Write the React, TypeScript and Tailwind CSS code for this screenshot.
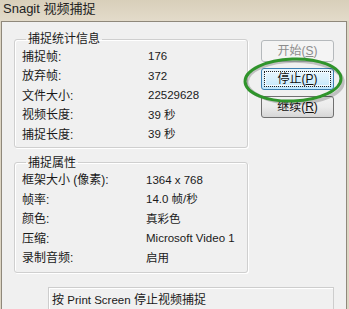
const FONT = { fontFamily: '"Liberation Sans", "Noto Sans CJK SC", sans-serif' };

const stats = [
  ["捕捉帧:", "176"],
  ["放弃帧:", "372"],
  ["文件大小:", "22529628"],
  ["视频长度:", "39 秒"],
  ["捕捉长度:", "39 秒"],
];

const props = [
  ["框架大小 (像素):", "1364 x 768"],
  ["帧率:", "14.0 帧/秒"],
  ["颜色:", "真彩色"],
  ["压缩:", "Microsoft Video 1"],
  ["录制音频:", "启用"],
];

function Group({ title, rows, valueX, pb }: { title: string; rows: string[][]; valueX: string; pb: string }) {
  return (
    <fieldset
      className={`border border-[#cfcfcf] rounded-[3px] shadow-[inset_1px_1px_0_#fff,1px_1px_0_#fff] pl-[7px] ${pb}`}
    >
      <legend className="ml-[4px] px-[2px] h-4 leading-4 text-[12px] text-[#1a1a1a]">{title}</legend>
      <div className="flex flex-col">
        {rows.map(([k, v]) => (
          <div key={k} className="flex items-center h-[19.5px] text-[12px] text-[#1a1a1a]">
            <span className={valueX}>{k}</span>
            <span className="text-[11.5px]">{v}</span>
          </div>
        ))}
      </div>
    </fieldset>
  );
}

function Btn({ label, mn, kind }: { label: string; mn: string; kind: "disabled" | "focus" | "normal" }) {
  const base = "w-[73px] h-[22px] rounded-[3px] border flex items-center justify-center text-[12px]";
  if (kind === "disabled")
    return (
      <div className={`${base} border-[#b5b9bc] bg-[#f4f4f4] text-[#8c8c8c]`}>
        {label}(<u>{mn}</u>)
      </div>
    );
  if (kind === "focus")
    return (
      <div className={`${base} border-[#3c7fb1] bg-linear-to-b from-[#eaf6fd] via-[#d9f0fc] to-[#bee6fd] p-[2px] text-[#111]`}>
        <div className="w-full h-full border border-dotted border-[#222] flex items-center justify-center shadow-[inset_0_0_0_1px_#f4fbff]">
          {label}(<u>{mn}</u>)
        </div>
      </div>
    );
  return (
    <div className={`${base} border-[#707070] bg-linear-to-b from-[#f2f2f2] via-[#ebebeb] to-[#d6d6d6] text-[#111]`}>
      {label}(<u>{mn}</u>)
    </div>
  );
}

export default function App() {
  return (
    <div style={FONT} className="relative w-[349px] h-[309px] overflow-hidden bg-[#ddd5c3]">
      {/* Title bar */}
      <div className="h-[21px] pl-[3px] pt-[1px] leading-[16px] text-[13px] text-[#222] bg-linear-to-b from-[#d8cfba] to-[#e3dbca]">
        Snagit 视频捕捉
      </div>

      {/* Window body */}
      <div className="ml-[1px] w-[346px] h-[288px] border-l border-t border-r border-[#8f887b] bg-[#f0f0f0] pl-[12px] pt-[9px]">
        <div className="flex">
          <div className="w-[234px] flex flex-col">
            <Group title="捕捉统计信息" rows={stats} valueX="w-[126px]" pb="pb-[2px]" />
            <div className="mt-[7px]">
              <Group title="捕捉属性" rows={props} valueX="w-[124px]" pb="pb-[4px]" />
            </div>
          </div>
          <div className="ml-[13px] mt-[9px] flex flex-col gap-[6px]">
            <Btn label="开始" mn="S" kind="disabled" />
            <Btn label="停止" mn="P" kind="focus" />
            <Btn label="继续" mn="R" kind="normal" />
          </div>
        </div>

        {/* Status */}
        <div className="ml-[34px] mt-[14px] w-[286px] h-[30px] border-l border-t border-r border-[#cdcdcd] shadow-[inset_1px_1px_0_#fff] pl-[3px] pt-[4px] leading-4 text-[12px] text-[#1a1a1a]">
          按 <span className="text-[11.5px]">Print Screen</span> 停止视频捕捉
        </div>
      </div>

      {/* Green highlight ellipse */}
      <svg className="absolute left-[241px] top-[55px]" width="106" height="52" viewBox="0 0 106 52">
        <ellipse cx="54" cy="27" rx="48" ry="21" fill="none" stroke="#000" strokeOpacity="0.2" strokeWidth="3.5" />
        <ellipse cx="52" cy="25" rx="48" ry="21" fill="none" stroke="#2f942b" strokeWidth="3" transform="rotate(-2 52 25)" />
      </svg>
    </div>
  );
}
